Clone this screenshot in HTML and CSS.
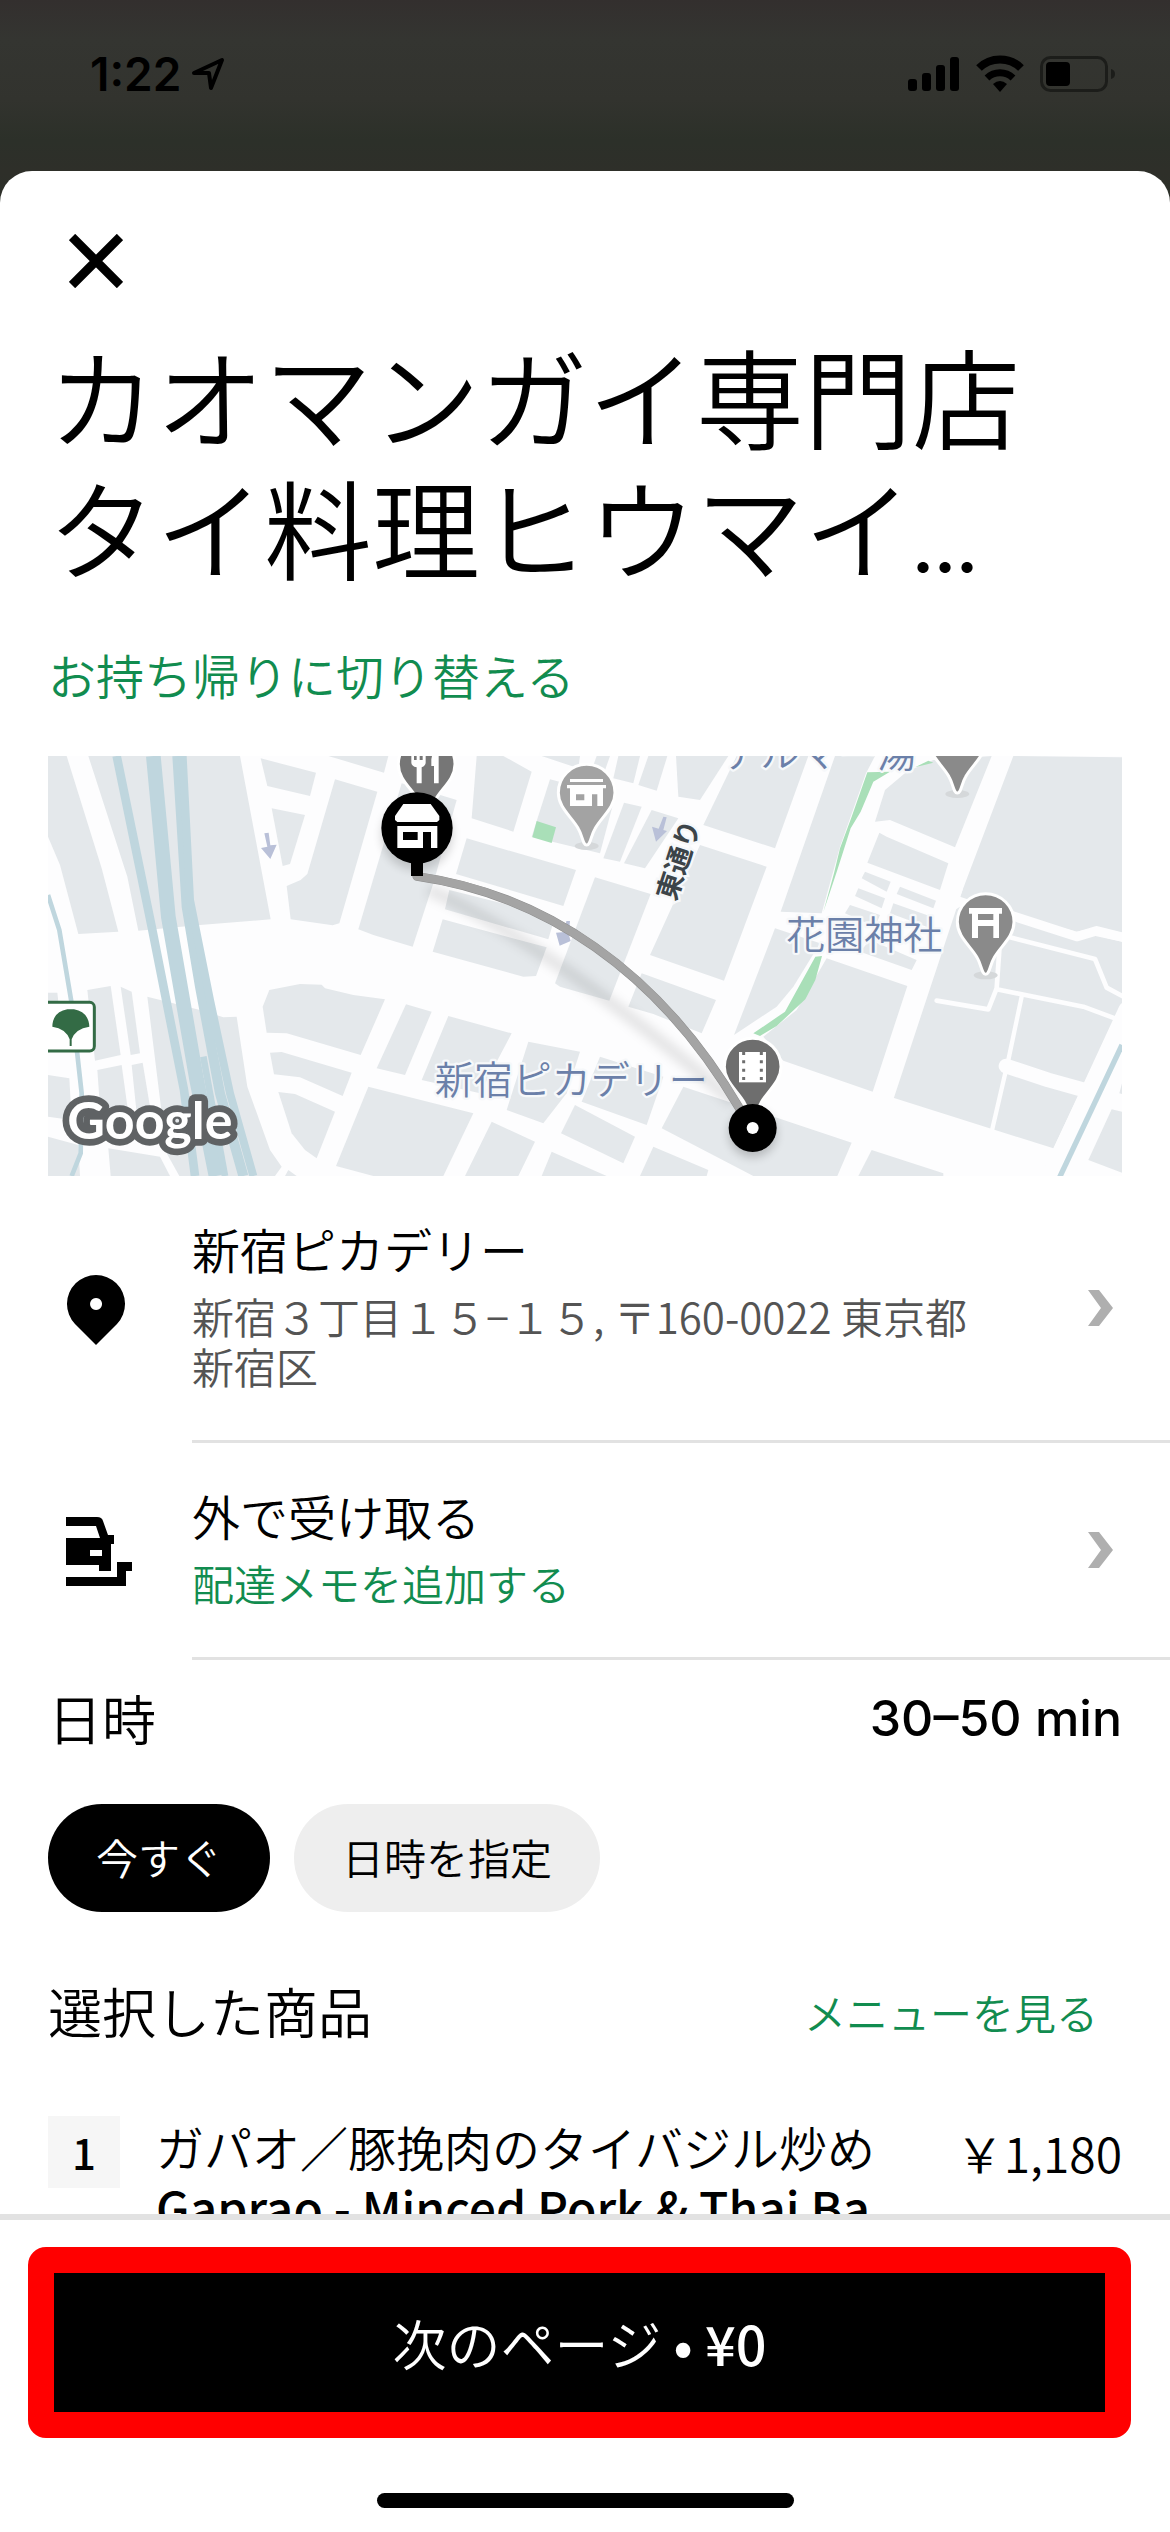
FILE: index.html
```html
<!DOCTYPE html>
<html lang="ja">
<head>
  <meta charset="utf-8">
  <meta name="viewport" content="width=device-width, initial-scale=1">
  <title>カオマンガイ専門店 タイ料理ヒウマイ</title>
  <link rel="stylesheet" href="styles.css">
</head>
<body>
  <div class="status-bar">
    <div class="status-left">
      <span class="time">1:22</span>
      <svg width="34" height="34" viewBox="0 0 34 34"><path d="M3 16 L31 3 L20 31 L18 16 Z" fill="none" stroke="#000" stroke-width="4" stroke-linejoin="round"/></svg>
    </div>
    <div class="status-right">
      <svg width="52" height="36" viewBox="0 0 52 36">
        <rect x="0" y="23" width="9" height="12" rx="3"/>
        <rect x="14" y="17" width="9" height="18" rx="3"/>
        <rect x="28" y="9" width="9" height="26" rx="3"/>
        <rect x="42" y="1" width="9" height="34" rx="3"/>
      </svg>
      <svg width="50" height="38" viewBox="0 0 50 38">
        <path d="M4 13 A30 30 0 0 1 46 13" fill="none" stroke="#000" stroke-width="8"/>
        <path d="M12 23 A19 19 0 0 1 38 23" fill="none" stroke="#000" stroke-width="7"/>
        <path d="M18 29 Q25 23 32 29 L25 37 Z"/>
      </svg>
      <svg width="76" height="36" viewBox="0 0 76 36">
        <rect x="1.5" y="1.5" width="65" height="33" rx="9" fill="none" stroke="#1c1d1a" stroke-width="3"/>
        <rect x="6" y="6" width="24" height="24" rx="4"/>
        <path d="M71 13 Q75 14 75 18 Q75 22 71 23 Z" fill="#1c1d1a"/>
      </svg>
    </div>
  </div>

  <main class="sheet">
    <div class="content">
      <button class="close" aria-label="閉じる">
        <svg width="54" height="54" viewBox="0 0 54 54"><path d="M3 3 L51 51 M51 3 L3 51" stroke="#000" stroke-width="9"/></svg>
      </button>
      <h1>カオマンガイ専門店<br>タイ料理ヒウマイ<span class="dots">...</span></h1>
      <a class="switch" href="#">お持ち帰りに切り替える</a>

      <svg class="map" viewBox="0 0 3222 1260" role="img" aria-label="地図">
        <defs>
          <path id="pin" d="M0 157 C-12 157 -12 130 -25 108 C-45 72 -85 45 -85 0 A85 85 0 1 1 85 0 C85 45 45 72 25 108 C12 130 12 157 0 157 Z"/>
          <filter id="soft" x="-20%" y="-20%" width="140%" height="140%"><feGaussianBlur stdDeviation="14"/></filter>
        </defs>
        <rect width="3222" height="1260" fill="#fdfdfe"/>

        <!-- city blocks, west -->
        <g class="block" transform="translate(-24 -48)">
          <path d="M24 48H80L185 385 235 575 115 582 60 375 24 290Z"/>
          <path d="M145 48H600L692 538 480 555 295 572 262 410Z"/>
          <path d="M662 55L828 98 810 168 682 138Z"/>
          <path d="M695 205L795 225 750 372 728 378Z"/>
          <path d="M885 118L1012 155 898 550 878 556 752 538 740 438 782 420 802 402Z"/>
          <path d="M865 48H1045L1032 98Z"/>
          <path d="M1085 130L1250 180 1180 430 1118 620 1000 585 955 568Z"/>
          <path d="M24 758H52L55 785H24Z"/>
          <path d="M142 750L212 738 242 945 165 962Z"/>
          <path d="M242 740L275 755 300 940 272 945Z"/>
          <path d="M322 770L480 810 550 832 590 830 622 1040 690 1230 725 1280 705 1308H418L380 1240Z"/>
          <path d="M172 990L245 975 265 1120 182 1130Z"/>
          <path d="M275 975L308 968 335 1130 290 1120Z"/>
          <path d="M24 1005L88 1015 95 1140 24 1130Z"/>
          <path d="M24 1190L115 1215 120 1308H24Z"/>
          <path d="M205 1225L360 1250 390 1308H212Z"/>
          <path d="M688 750L780 732 845 734 855 745 940 765 1035 778 962 945 740 880 680 878 668 800Z"/>
          <path d="M1098 793L1175 815 1095 1005 1010 985Z"/>
          <path d="M690 938L725 936 935 998 908 1068 780 1012 702 1003Z"/>
          <path d="M715 1056L765 1062 885 1115 830 1255 795 1230 755 1180Z"/>
          <path d="M985 1040L1300 1120 1210 1308H1000L888 1278Z"/>
          <path d="M745 1290L770 1308H735Z"/>
        </g>
        <!-- city blocks, centre -->
        <g class="block" transform="translate(1056 -48)">
          <path d="M230 48H310L395 95 340 275 215 235Z"/>
          <path d="M200 295L528 390 490 498 168 402Z"/>
          <path d="M148 450L465 530 445 598 135 508Z"/>
          <path d="M128 538L440 622 408 708 370 710 98 635Z"/>
          <path d="M450 118L645 170 600 340 395 290Z"/>
          <path d="M425 48H540L535 85Z"/>
          <path d="M590 48H630L610 105 575 90Z"/>
          <path d="M655 48H720L700 130 640 115Z"/>
          <path d="M745 48H802L770 152 715 135Z"/>
          <path d="M828 48H985L900 180 835 170Z"/>
          <path d="M672 188L725 200 660 365 610 355Z"/>
          <path d="M755 210L835 235 735 385 672 370Z"/>
          <path d="M1010 48H1225L1125 325 910 255Z"/>
          <path d="M900 315L1100 380 972 722 750 645Z"/>
          <path d="M585 412L752 462 628 782 480 740 465 730Z"/>
          <path d="M725 700L948 780 905 880 760 822 685 800Z"/>
          <path d="M1125 565L1260 610 1180 740 1130 800 1002 885Z"/>
          <path d="M145 828L335 880 240 1060 65 1020Z"/>
          <path d="M385 905L540 935 500 1060 430 1150 320 1110Z"/>
          <path d="M600 950L790 1010 740 1155 545 1085Z"/>
          <path d="M275 1145L405 1205 355 1308H195Z"/>
          <path d="M525 1095L705 1190 670 1270 483 1180Z"/>
          <path d="M455 1235L620 1308H425Z"/>
          <path d="M760 1220L925 1290 920 1308H720Z"/>
          <path d="M850 1040L1355 1208 1312 1308H1060L785 1165Z"/>
        </g>
        <!-- city blocks, east -->
        <g class="block" transform="translate(2136 -48)">
          <path d="M225 48H345L318 100 240 320 185 520 62 515Z"/>
          <path d="M375 150L440 95 520 60 695 48 585 322 390 240 345 245Z"/>
          <path d="M760 48L1086 52V578L1010 562 950 575 765 525 600 470Z"/>
          <path d="M358 278L380 290 565 370 540 450 322 368Z"/>
          <path d="M315 395L392 425 380 455 305 415Z"/>
          <path d="M420 440L528 482 520 505 410 462Z"/>
          <path d="M295 445L375 475 365 505 285 468Z"/>
          <path d="M400 490L515 530 500 560 390 520Z"/>
          <path d="M270 495L360 525 345 560 255 520Z"/>
          <path d="M330 600L470 660 455 690 300 635Z"/>
          <path d="M200 655L442 738 338 1055 70 962 10 890 110 810Z"/>
          <path d="M560 525L600 500 1086 605V790L880 1225 395 1072Z"/>
          <path d="M335 1230L550 1300V1308H295Z"/>
          <path d="M985 1260L1055 1108 1086 1115V1298Z"/>
          <path d="M1078 1060L1086 1030V1062Z"/>
        </g>
        <g class="lane" transform="translate(2136 -48)">
          <path d="M690 505L765 530 950 590 1010 572 1090 592" stroke-width="28"/>
          <path d="M750 592L1005 657 1040 743 1090 770" stroke-width="14"/>
          <path d="M718 630L710 745 685 808 530 782" stroke-width="14"/>
          <path d="M710 748L970 800 1065 835" stroke-width="14"/>
          <path d="M785 770L745 960 695 1175" stroke-width="13"/>
          <path d="M738 978L865 1020 990 1055" stroke-width="44"/>
          <path d="M1100 810L870 1308" stroke-width="50"/>
          <path d="M580 445L365 1095" stroke-width="56"/>
        </g>

        <!-- railway and water lines -->
        <g class="rail" transform="translate(-24 -48)">
          <path d="M230 48L335 560 432 1050 465 1308" stroke-width="26"/>
          <path d="M340 48L385 530 470 1020 528 1308" stroke-width="44"/>
          <path d="M412 48L440 500 480 740 540 1060 610 1308" stroke-width="30"/>
          <path d="M428 48L450 480 510 780 570 1060 640 1308" stroke-width="24"/>
          <path d="M490 950L555 1308" stroke-width="20"/>
          <path d="M24 465L58 570 95 790 125 1060 122 1240 95 1308" stroke-width="14"/>
          <path d="M3246 915L3055 1320" stroke-width="16"/>
        </g>
        <g fill="#a9dfb8" transform="translate(2136 -48)">
          <path d="M322 97L390 95 340 125 302 215 272 265 232 390 190 516 222 400 240 325 275 230Z"/>
          <path d="M166 650L186 648 166 720 136 778 50 858 0 888 -20 880 75 815Z"/>
          <path d="M465 82L505 62 520 68Z"/>
          <path d="M-670 243L-612 262 -625 309 -683 292Z"/>
        </g>
        <g fill="#b9c0d8">
          <path d="M649 232L662 230 667 268 686 266 667 309 639 276 658 272Z"/>
          <path d="M1846 182L1856 184 1846 222 1857 225 1824 257 1812 212 1832 218Z"/>
          <path d="M1555 495L1566 495 1562 535 1568 555 1535 569 1524 530 1550 528Z"/>
        </g>

        <!-- place names -->
        <g class="place">
          <text x="2020" y="34">テルマー湯</text>
          <text x="2215" y="580">花園神社</text>
          <text x="1160" y="1013">新宿ピカデリー</text>
        </g>
        <text class="street" transform="translate(1882 438) rotate(-72)">東通り</text>

        <!-- place pins -->
        <g class="pin">
          <ellipse cx="1616" cy="270" rx="36" ry="12"/>
          <ellipse cx="2813" cy="658" rx="36" ry="12"/>
          <ellipse cx="2728" cy="114" rx="36" ry="12"/>
          <use href="#pin" x="1136" y="25" fill="#767676"/>
          <use href="#pin" x="1616" y="110" fill="#a3a3a3"/>
          <use href="#pin" x="2813" y="498" fill="#8a8a8a"/>
          <use href="#pin" x="2728" y="-46" fill="#8a8a8a"/>
          <use href="#pin" x="2114" y="932" fill="#6e6e6e"/>
        </g>
        <g fill="#fff">
          <path d="M1090 0H1098V12H1106V0H1115V12H1124V0H1133V20Q1133 28 1121 34V82H1106V34Q1090 30 1090 20Z"/>
          <path d="M1152 0H1172V82H1158V30H1150V10Z"/>
          <path d="M1566 69H1665V78H1566ZM1557 87H1674V97H1665V150H1648V115H1632V150H1566V97H1557ZM1584 115V133H1609V115Z" fill-rule="evenodd"/>
          <path d="M2763 456H2862V473H2853V546H2836V510H2790V546H2772V473H2763ZM2790 474V492H2836V474Z" fill-rule="evenodd"/>
          <path d="M2073 888H2154V979H2073Z"/>
        </g>
        <path d="M2087 888V978M2140 888V978" stroke="#6e6e6e" stroke-width="9" stroke-dasharray="9 16"/>

        <!-- park mark and map logo -->
        <rect x="-12" y="739" width="151" height="146" rx="14" fill="#fff" stroke="#336b45" stroke-width="9"/>
        <path d="M13 812 Q14 768 58 760 H78 Q122 768 124 812 Q82 818 71 850 V870 H65 V850 Q54 818 13 812 Z" fill="#336b45"/>
        <text class="logo" x="58" y="1150">Google</text>

        <!-- route -->
        <path d="M1140 400 Q1500 560 2060 1040" fill="none" stroke="#000" stroke-opacity=".09" stroke-width="40" filter="url(#soft)"/>
        <circle cx="1107" cy="236" r="107" opacity=".16" filter="url(#soft)"/>
        <circle cx="2114" cy="1132" r="72" opacity=".2" filter="url(#soft)"/>
        <path d="M1107 361 C1485 415 1830 640 2076 1060" fill="none" stroke="#8d8d8d" stroke-width="27" stroke-linecap="round"/>
        <path d="M1107 361 C1485 415 1830 640 2076 1060" fill="none" stroke="#a4a4a4" stroke-width="24" stroke-linecap="round"/>
        <circle cx="1107" cy="216" r="107"/>
        <path d="M1089 315H1125V360H1089Z"/>
        <path d="M1066 144H1148L1174 180V192L1167 198H1048L1041 192V180Z" fill="#fff"/>
        <path d="M1048 210H1168V276H1149V228H1125V276H1048ZM1065 228V252H1109V228Z" fill="#fff" fill-rule="evenodd"/>
        <circle cx="2114" cy="1116" r="72"/>
        <circle cx="2114" cy="1116" r="18" fill="#fff"/>
      </svg>

      <button class="row">
        <span class="row-icon">
          <svg width="60" height="70" viewBox="0 0 60 70"><path d="M30 70 L9 49 A29 29 0 1 1 51 49 Z M30 23 a6 6 0 1 0 0.1 0 Z" fill-rule="evenodd"/></svg>
        </span>
        <span class="row-body">
          <span class="row-text">
            <span class="row-title">新宿ピカデリー</span>
            <span class="row-sub">新宿３丁目１５−１５, 〒160-0022 東京都新宿区</span>
          </span>
          <svg class="chevron" width="26" height="36" viewBox="0 0 26 36"><path d="M1 0H12L26 18 12 36H1L14 18Z" fill="#afafaf"/></svg>
        </span>
      </button>
      <button class="row">
        <span class="row-icon">
          <svg width="66" height="70" viewBox="0 0 66 70"><path d="M0 0H31Q36 0 37 4L42 18H48V27H45V54H33V48H0V21H34L30 9H0ZM24 33V39H36V33ZM51 45H66V54H60V69H0V60H51Z" fill-rule="evenodd"/></svg>
        </span>
        <span class="row-body">
          <span class="row-text">
            <span class="row-title">外で受け取る</span>
            <span class="row-sub green">配達メモを追加する</span>
          </span>
          <svg class="chevron" width="26" height="36" viewBox="0 0 26 36"><path d="M1 0H12L26 18 12 36H1L14 18Z" fill="#afafaf"/></svg>
        </span>
      </button>

      <section class="schedule">
        <div class="section-head">
          <h2>日時</h2>
          <span class="eta">30–50 min</span>
        </div>
        <div class="pills">
          <button class="pill selected">今すぐ</button>
          <button class="pill">日時を指定</button>
        </div>
      </section>

      <section class="items">
        <div class="section-head">
          <h2>選択した商品</h2>
          <a class="menu-link" href="#">メニューを見る</a>
        </div>
        <div class="item">
          <span class="qty">1</span>
          <span class="item-name">ガパオ／豚挽肉のタイバジル炒め <span class="en">Gaprao - Minced Pork &amp; Thai Ba</span></span>
          <span class="price">￥1,180</span>
        </div>
      </section>
    </div>

    <footer class="footer">
      <button class="next">次のページ<span class="en"> • ¥0</span></button>
      <div class="home-bar"></div>
    </footer>
  </main>
</body>
</html>
```

FILE: styles.css
```css
* {
  box-sizing: border-box;
}
body {
  margin: 0;
  height: 100vh;
  display: flex;
  flex-direction: column;
  overflow: hidden;
  background: linear-gradient(#332f2e, #343531 40px, #32332e 100px, #2c3029 140px, #2e2f29 171px, #2b3029 220px);
  color: #000;
  font-family: "Noto Sans CJK JP", sans-serif;
  font-weight: 350;
}
button {
  border: none;
  background: none;
  padding: 0;
  color: inherit;
  font-family: inherit;
  font-weight: inherit;
  cursor: pointer;
}
a {
  color: #118c4f;
  text-decoration: none;
}
h1, h2 {
  margin: 0;
  font-weight: inherit;
}
svg {
  display: block;
}

/* status bar */
.status-bar {
  height: 171px;
  padding: 0 54px 24px 90px;
  display: flex;
  align-items: center;
  justify-content: space-between;
}
.status-left {
  display: flex;
  align-items: center;
  gap: 10px;
}
.status-right {
  display: flex;
  align-items: center;
  gap: 15px;
}
.time {
  font-family: "Inter", sans-serif;
  font-size: 46px;
  font-weight: 600;
}

/* sheet */
.sheet {
  flex: 1;
  min-height: 0;
  display: flex;
  flex-direction: column;
  background: #fff;
  border-radius: 32px 32px 0 0;
}
.content {
  flex: 1;
  min-height: 0;
  overflow: hidden;
}
.close {
  display: block;
  margin: 63px 0 0 69px;
}
h1 {
  margin: 41px 48px 0;
  font-size: 108px;
  line-height: 131px;
}
.dots {
  font-family: "Inter", sans-serif;
  font-size: 66px;
  line-height: 1;
  font-weight: 700;
}
.switch {
  display: block;
  margin: 53px 48px 0;
  font-size: 48px;
  line-height: 60px;
}

/* map */
.map {
  display: block;
  width: calc(100% - 96px);
  margin: 52px 48px 0;
}
.block {
  fill: #e4e8eb;
}
.lane {
  fill: none;
  stroke: #fdfdfe;
  stroke-linecap: round;
  stroke-linejoin: round;
}
.rail {
  fill: none;
  stroke: #bfd6de;
}
.place {
  fill: #6b80a9;
  stroke: #f6f8fa;
  stroke-width: 14px;
  stroke-linejoin: round;
  paint-order: stroke;
  font-size: 117px;
}
.street {
  fill: #3c4449;
  stroke: #f6f8fa;
  stroke-width: 14px;
  paint-order: stroke;
  font-size: 82px;
  font-weight: 700;
}
.pin use {
  stroke: #fff;
  stroke-width: 9px;
}
.pin ellipse {
  fill: #d5d8da;
}
.logo {
  font-family: "Lato", sans-serif;
  font-size: 156px;
  font-weight: 700;
  fill: #fff;
  stroke: #5f6264;
  stroke-width: 40px;
  stroke-linejoin: round;
  paint-order: stroke;
}

/* address rows */
.row {
  width: 100%;
  display: flex;
  align-items: stretch;
  text-align: left;
}
.row-icon {
  flex: none;
  width: 192px;
  padding-left: 66px;
  display: flex;
  align-items: center;
}
.row-body {
  flex: 1;
  display: flex;
  align-items: center;
  justify-content: space-between;
  padding-right: 57px;
  border-bottom: 3px solid #e2e2e2;
}
.row-text {
  max-width: 800px;
  display: flex;
  flex-direction: column;
  gap: 10px;
  padding: 39px 0 49px;
}
.row-title {
  font-size: 48px;
  line-height: 66px;
}
.row-sub {
  font-size: 42px;
  line-height: 50px;
  color: #545454;
}
.green {
  color: #118c4f;
}
.chevron {
  flex: none;
}

/* schedule */
.section-head {
  display: flex;
  align-items: center;
  justify-content: space-between;
}
.section-head h2 {
  font-size: 54px;
  line-height: 66px;
}
.schedule {
  padding: 25px 48px 0;
}
.eta {
  font-family: "Inter", sans-serif;
  font-size: 50px;
  font-weight: 500;
  line-height: 66px;
}
.pills {
  display: flex;
  gap: 24px;
  margin-top: 53px;
}
.pill {
  height: 108px;
  padding: 0 48px 4px;
  border-radius: 54px;
  background: #eee;
  font-size: 42px;
}
.pill.selected {
  background: #000;
  color: #fff;
}

/* items */
.items {
  padding: 66px 48px 0;
}
.menu-link {
  margin-right: 24px;
  font-size: 42px;
}
.item {
  display: flex;
  align-items: flex-start;
  margin-top: 72px;
}
.qty {
  flex: none;
  width: 72px;
  height: 72px;
  background: #f6f6f6;
  font-size: 42px;
  line-height: 72px;
  font-weight: 500;
  text-align: center;
}
.item-name {
  flex: 1;
  margin-left: 36px;
  max-width: 730px;
  font-size: 48px;
  line-height: 60px;
}
.en {
  font-weight: 500;
}
.price {
  margin-left: auto;
  font-size: 48px;
  line-height: 72px;
}

/* footer */
.footer {
  flex: none;
  padding: 27px 28px 24px;
  border-top: 6px solid #e2e2e2;
}
.next {
  display: block;
  width: calc(100% - 11px);
  height: 191px;
  border: 26px solid #f00;
  border-radius: 18px;
  background: #000;
  color: #fff;
  font-size: 54px;
}
.home-bar {
  width: 417px;
  height: 15px;
  margin: 55px auto 0;
  border-radius: 8px;
  background: #000;
}
```
